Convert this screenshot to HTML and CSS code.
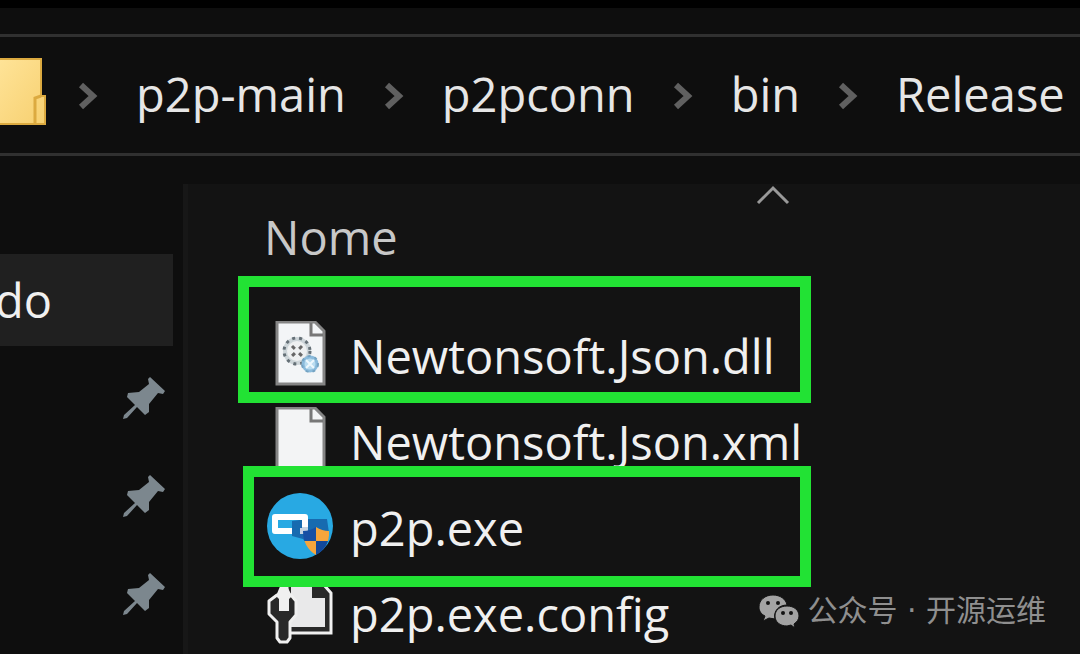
FILE: index.html
```html
<!DOCTYPE html>
<html lang="pt">
<head>
    <meta charset="UTF-8">
    <meta name="viewport" content="width=device-width, initial-scale=1.0">
    <title>Release</title>
    <link rel="stylesheet" href="styles.css">
</head>
<body>
    <header class="address-bar">
        <svg class="folder" viewBox="0 0 46 68" aria-hidden="true">
            <defs>
                <linearGradient id="folderFill" x1="0" y1="0" x2="1" y2="1">
                    <stop offset="0" stop-color="#ffe499"/>
                    <stop offset="1" stop-color="#f7d070"/>
                </linearGradient>
            </defs>
            <path d="M-4 1H41V38H45V66H-4Z" fill="url(#folderFill)" stroke="#dcaa40" stroke-width="2"/>
            <path d="M41 38L35 40V65" fill="none" stroke="#dcaa40" stroke-width="3"/>
        </svg>
        <nav aria-label="Path">
            <ol class="crumbs">
                <li>
                    <svg class="chevron" viewBox="0 0 20 28" aria-hidden="true"><path d="M3 3L15 14L3 25"/></svg>
                    <a href="#">p2p-main</a>
                </li>
                <li>
                    <svg class="chevron" viewBox="0 0 20 28" aria-hidden="true"><path d="M3 3L15 14L3 25"/></svg>
                    <a href="#">p2pconn</a>
                </li>
                <li>
                    <svg class="chevron" viewBox="0 0 20 28" aria-hidden="true"><path d="M3 3L15 14L3 25"/></svg>
                    <a href="#">bin</a>
                </li>
                <li>
                    <svg class="chevron" viewBox="0 0 20 28" aria-hidden="true"><path d="M3 3L15 14L3 25"/></svg>
                    <a href="#">Release</a>
                </li>
            </ol>
        </nav>
    </header>

    <div class="explorer">
        <aside class="sidebar">
            <a class="place selected" href="#">do</a>
            <a class="place" href="#" aria-label="Pinned folder 1">
                <svg class="pin" viewBox="0 0 42 42" aria-hidden="true"><path d="M27 0L42 14L40 17L35 16L26 27V35L22 38L14 30L4 41L0 42L1 38L12 28L4 20L5 16L16 15L26 7L25 2Z"/></svg>
            </a>
            <a class="place" href="#" aria-label="Pinned folder 2">
                <svg class="pin" viewBox="0 0 42 42" aria-hidden="true"><path d="M27 0L42 14L40 17L35 16L26 27V35L22 38L14 30L4 41L0 42L1 38L12 28L4 20L5 16L16 15L26 7L25 2Z"/></svg>
            </a>
            <a class="place" href="#" aria-label="Pinned folder 3">
                <svg class="pin" viewBox="0 0 42 42" aria-hidden="true"><path d="M27 0L42 14L40 17L35 16L26 27V35L22 38L14 30L4 41L0 42L1 38L12 28L4 20L5 16L16 15L26 7L25 2Z"/></svg>
            </a>
        </aside>

        <main class="files">
            <table>
                <thead>
                    <tr>
                        <th scope="col">
                            <button type="button" class="sort">Nome</button>
                            <svg class="sort-arrow" viewBox="0 0 34 20" aria-hidden="true"><path d="M2 18L17 3L32 18"/></svg>
                        </th>
                    </tr>
                </thead>
                <tbody>
                    <tr>
                        <td>
                            <div class="file">
                                <svg class="icon" viewBox="0 0 66 66" aria-hidden="true">
                                    <path d="M10 1H48L57 10V63H10Z" fill="#f3f5f7" stroke="#858585" stroke-width="3"/>
                                    <path d="M44 2V14H56" fill="none" stroke="#777" stroke-width="3"/>
                                    <circle cx="30" cy="30" r="12" fill="#eef0f1" stroke="#cdd5d9" stroke-width="4"/>
                                    <circle cx="30" cy="30" r="13" fill="none" stroke="#657077" stroke-width="3" stroke-dasharray="3 4"/>
                                    <path d="M25 25L35 35M35 25L25 35" stroke="#666" stroke-width="3" stroke-dasharray="4 6"/>
                                    <circle cx="43" cy="43" r="7" fill="#b9dcf0" stroke="#8bbbdc" stroke-width="3"/>
                                    <circle cx="43" cy="43" r="8" fill="none" stroke="#74a3c2" stroke-width="2" stroke-dasharray="3 4"/>
                                    <path d="M39 39L47 47M47 39L39 47" stroke="#eef8fe" stroke-width="2"/>
                                </svg>
                                <span class="name">Newtonsoft.Json.dll</span>
                            </div>
                            <span class="mark mark-library"></span>
                        </td>
                    </tr>
                    <tr>
                        <td>
                            <div class="file">
                                <svg class="icon" viewBox="0 0 66 66" aria-hidden="true">
                                    <path d="M10 1H48L57 10V63H10Z" fill="#f3f4f5" stroke="#858585" stroke-width="3"/>
                                    <path d="M44 2V14H56" fill="none" stroke="#777" stroke-width="3"/>
                                </svg>
                                <span class="name">Newtonsoft.Json.xml</span>
                            </div>
                        </td>
                    </tr>
                    <tr>
                        <td>
                            <div class="file">
                                <svg class="icon" viewBox="0 0 66 66" aria-hidden="true">
                                    <defs>
                                        <clipPath id="shield"><path d="M36 38Q43 38 49 34Q55 38 62 38Q63 54 49 62Q36 54 36 38Z"/></clipPath>
                                    </defs>
                                    <circle cx="33" cy="33" r="33" fill="#28a9e3"/>
                                    <path d="M40 26H60L62 40L49 62L36 46L25 43V28Z" fill="#176bb0"/>
                                    <path d="M33 38H38V32" fill="none" stroke="#c5d4e2" stroke-width="6"/>
                                    <path d="M25 38H8V24H38V34" fill="none" stroke="#fff" stroke-width="6" stroke-linejoin="round"/>
                                    <g clip-path="url(#shield)">
                                        <path d="M34 32H49V48H34Z" fill="#1650a5"/>
                                        <path d="M49 32H65V48H49Z" fill="#f6a63c"/>
                                        <path d="M34 48H49V66H34Z" fill="#f6a63c"/>
                                        <path d="M49 48H65V66H49Z" fill="#12489a"/>
                                    </g>
                                </svg>
                                <span class="name">p2p.exe</span>
                            </div>
                            <span class="mark mark-program"></span>
                        </td>
                    </tr>
                    <tr>
                        <td>
                            <div class="file">
                                <svg class="icon" viewBox="0 0 66 66" aria-hidden="true">
                                    <path d="M20 6H57L64 14V54H20Z" fill="#292929" stroke="#f0f0f0" stroke-width="3"/>
                                    <path d="M24 5H45V19H58V48H24Z" fill="#e9e9ea"/>
                                    <path d="M10 16L2 22V35L10 43V59L13 63H20L23 59V43L29 36V22L24 16Z" fill="#292929" stroke="#f0f0f0" stroke-width="3" stroke-linejoin="round"/>
                                    <path d="M12 32V20L9 17L14 5H19L25 17L22 20V32Z" fill="#f0f0f0"/>
                                </svg>
                                <span class="name">p2p.exe.config</span>
                            </div>
                        </td>
                    </tr>
                </tbody>
            </table>
        </main>
    </div>

    <div class="watermark" lang="zh">
        <svg viewBox="0 0 40 33" aria-hidden="true">
            <path class="bubble" d="M14 0C6 0 0 5 0 12C0 16 2 19 6 21L4 26L10 23L16 24C14 16 20 10 28 10C27 4 21 0 14 0Z"/>
            <path class="bubble" d="M28 11C21 11 16 15 16 21C16 27 21 31 28 31L32 30L36 33L35 29C38 27 40 24 40 21C40 15 35 11 28 11Z"/>
            <circle cx="9" cy="8" r="2"/>
            <circle cx="19" cy="8" r="2"/>
            <circle cx="24" cy="18" r="2"/>
            <circle cx="32" cy="18" r="2"/>
        </svg>
        <span>公众号 · 开源运维</span>
    </div>
</body>
</html>
```

FILE: styles.css
```css
* {
    box-sizing: border-box;
}
body {
    margin: 0;
    height: 100vh;
    display: flex;
    flex-direction: column;
    overflow: hidden;
    border-top: 8px solid #000;
    background: #0e0e0e;
    color: #f0f0f0;
    font-family: "Open Sans", "Noto Sans", sans-serif;
    font-size: 47px;
    line-height: 64px;
}
a {
    color: inherit;
    text-decoration: none;
}

/* address bar */
.address-bar {
    flex: none;
    display: flex;
    align-items: center;
    gap: 32px;
    height: 122px;
    margin-top: 26px;
    padding-bottom: 2px;
    border-top: 3px solid #303030;
    border-bottom: 3px solid #303030;
}
.folder {
    flex: none;
    width: 46px;
    height: 68px;
    margin-bottom: 4px;
}
.crumbs {
    display: flex;
    gap: 38px;
    margin: 0;
    padding: 0;
    list-style: none;
    white-space: nowrap;
    color: #e6e6e6;
}
.crumbs li {
    display: flex;
    align-items: center;
    gap: 38px;
}
.chevron {
    width: 20px;
    height: 28px;
    margin-top: 4px;
}
.chevron path {
    fill: none;
    stroke: #606060;
    stroke-width: 6;
}

/* sidebar and file list */
.explorer {
    flex: 1;
    display: flex;
    min-height: 0;
}
.sidebar {
    flex: none;
    width: 173px;
    padding-top: 98px;
    display: flex;
    flex-direction: column;
    gap: 6px;
}
.place {
    flex: none;
    display: flex;
    align-items: center;
    height: 92px;
    margin-left: -5px;
    padding-right: 8px;
}
.place.selected {
    background: #202020;
}
.pin {
    width: 42px;
    height: 42px;
    margin-left: auto;
    fill: #7c878e;
}
.files {
    flex: 1;
    margin: 28px 0 0 10px;
    border-left: 5px solid #171717;
    background: #131313;
}
table {
    width: 100%;
    border-collapse: collapse;
}
th, td {
    position: relative;
    padding: 0 0 0 79px;
    text-align: left;
}
th {
    height: 127px;
    padding-top: 21px;
    padding-left: 76px;
    vertical-align: top;
}
.sort {
    display: block;
    padding: 0;
    border: 0;
    background: none;
    color: #c8c8c8;
    font: inherit;
    font-weight: 400;
}
.sort-arrow {
    position: absolute;
    left: 568px;
    top: 1px;
    width: 34px;
    height: 20px;
}
.sort-arrow path {
    fill: none;
    stroke: #999;
    stroke-width: 3;
}
.file {
    display: flex;
    align-items: center;
    gap: 17px;
    height: 86px;
    white-space: nowrap;
}
.name {
    padding-top: 3px;
}
.icon {
    flex: none;
    width: 66px;
    height: 66px;
}

/* green outlines around the important files */
.mark {
    position: absolute;
    z-index: 1;
    border: 11px solid #22e234;
}
.mark-library {
    left: 50px;
    top: -35px;
    width: 573px;
    height: 127px;
}
.mark-program {
    left: 55px;
    top: -17px;
    width: 568px;
    height: 121px;
}

.watermark {
    position: absolute;
    right: 34px;
    bottom: 23px;
    display: flex;
    align-items: center;
    gap: 8px;
    color: #8f8f8f;
    font-family: "DejaVu Sans", "Noto Sans CJK SC", sans-serif;
    font-size: 30px;
    line-height: 40px;
}
.watermark svg {
    width: 40px;
    height: 33px;
    fill: #131313;
}
.watermark .bubble {
    fill: #a3a3a3;
    stroke: #131313;
    stroke-width: 1;
}
```
